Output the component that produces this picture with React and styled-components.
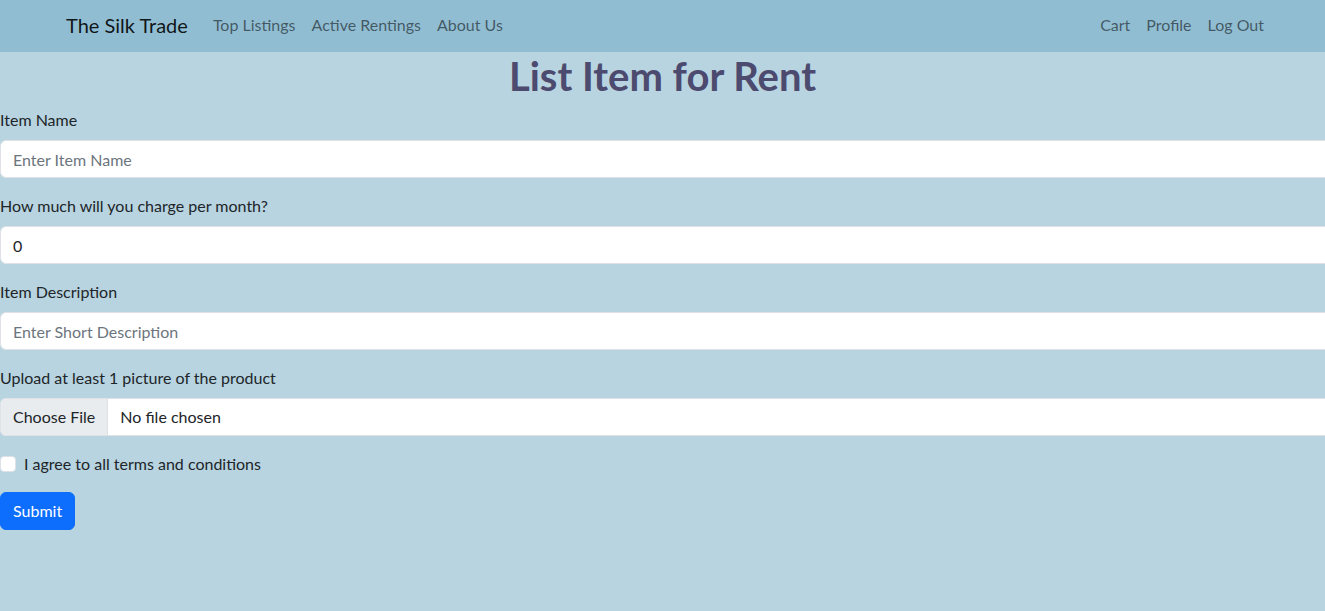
import React from 'react';
import styled, { createGlobalStyle } from 'styled-components';

const GlobalStyle = createGlobalStyle`
  html, body {
    margin: 0;
    padding: 0;
    overflow-x: hidden;
  }
  body {
    background-color: #b7d4e0;
    font-family: Lato, "Open Sans", sans-serif;
    font-size: 16px;
    line-height: 1.5;
    color: #212529;
  }
  * {
    box-sizing: border-box;
  }
`;

const Navbar = styled.nav`
  background-color: #90bdd2;
  height: 52px;
  display: flex;
  align-items: center;
  padding: 0 53px 2px 66px;
`;

const Brand = styled.a`
  font-size: 20px;
  color: rgba(0, 0, 0, 0.9);
  text-decoration: none;
  margin-right: 17px;
  white-space: nowrap;
`;

const NavGroup = styled.div`
  display: flex;
  align-items: center;
  margin-left: ${({ right }) => (right ? 'auto' : '0')};
`;

const NavItem = styled.a`
  color: rgba(0, 0, 0, 0.55);
  text-decoration: none;
  padding: 0 8px;
  font-size: 16px;
  white-space: nowrap;
`;

const Title = styled.h1`
  margin: 0 0 8px;
  text-align: center;
  font-size: 40px;
  line-height: 48px;
  font-weight: 700;
  color: #4c4a6e;
`;

const Form = styled.form`
  display: flex;
  flex-direction: column;
`;

const Group = styled.div`
  margin-bottom: 16px;
`;

const Label = styled.label`
  display: block;
  margin-bottom: 8px;
  line-height: 24px;
`;

const Input = styled.input`
  display: block;
  width: 100%;
  height: 38px;
  padding: 6px 12px;
  font: inherit;
  color: #212529;
  background: #fff;
  border: 1px solid #dee2e6;
  border-right: none;
  border-radius: 6px 0 0 6px;
  outline: none;

  &::placeholder {
    color: #6c757d;
  }
`;

const FileBox = styled.div`
  display: flex;
  height: 38px;
  background: #fff;
  border: 1px solid #dee2e6;
  border-right: none;
  border-radius: 6px 0 0 6px;
  overflow: hidden;
`;

const FileButton = styled.span`
  display: flex;
  align-items: center;
  padding: 0 12px;
  background: #e9ecef;
  border-right: 1px solid #dee2e6;
`;

const FileText = styled.span`
  display: flex;
  align-items: center;
  padding: 0 12px;
`;

const CheckRow = styled.div`
  display: flex;
  align-items: center;
  gap: 8px;
  margin-bottom: 16px;
  line-height: 24px;
`;

const Check = styled.span`
  width: 16px;
  height: 16px;
  background: #fff;
  border: 1px solid #dee2e6;
  border-radius: 4px;
`;

const SubmitButton = styled.button`
  align-self: flex-start;
  height: 38px;
  padding: 6px 12px;
  font: inherit;
  color: #fff;
  background: #0d6efd;
  border: 1px solid #0d6efd;
  border-radius: 6px;
`;

export default function App() {
  return (
    <>
      <GlobalStyle />
      <Navbar>
        <Brand href="#">The Silk Trade</Brand>
        <NavGroup>
          <NavItem href="#">Top Listings</NavItem>
          <NavItem href="#">Active Rentings</NavItem>
          <NavItem href="#">About Us</NavItem>
        </NavGroup>
        <NavGroup right>
          <NavItem href="#">Cart</NavItem>
          <NavItem href="#">Profile</NavItem>
          <NavItem href="#">Log Out</NavItem>
        </NavGroup>
      </Navbar>
      <Title>List Item for Rent</Title>
      <Form>
        <Group>
          <Label>Item Name</Label>
          <Input placeholder="Enter Item Name" />
        </Group>
        <Group>
          <Label>How much will you charge per month?</Label>
          <Input defaultValue="0" />
        </Group>
        <Group>
          <Label>Item Description</Label>
          <Input placeholder="Enter Short Description" />
        </Group>
        <Group>
          <Label>Upload at least 1 picture of the product</Label>
          <FileBox>
            <FileButton>Choose File</FileButton>
            <FileText>No file chosen</FileText>
          </FileBox>
        </Group>
        <CheckRow>
          <Check />
          <span>I agree to all terms and conditions</span>
        </CheckRow>
        <SubmitButton type="button">Submit</SubmitButton>
      </Form>
    </>
  );
}
